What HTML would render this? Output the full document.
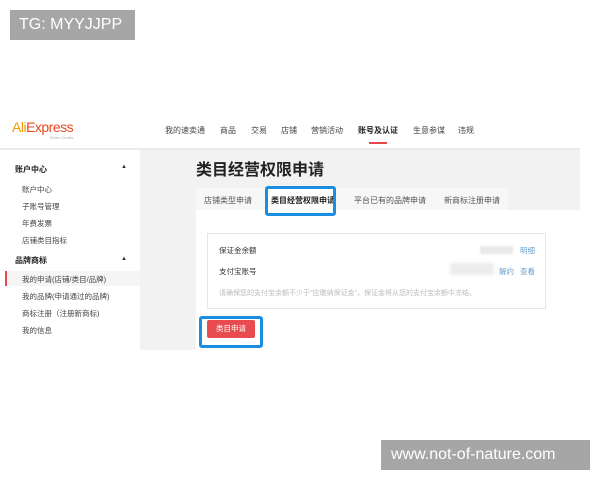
<!DOCTYPE html>
<html><head><meta charset="utf-8"><style>
*{margin:0;padding:0;box-sizing:border-box}
body{width:600px;height:480px;background:#fff;position:relative;overflow:hidden;font-family:"Liberation Sans","Noto Sans CJK SC",sans-serif;color:#333}
.a{position:absolute;white-space:nowrap}
.wm{background:#a6a6a6;color:#fff;font-size:16px;line-height:30px;padding-left:9px}
.nav{font-size:8px;color:#444;top:125px}
.sb{font-size:7.5px;color:#444;left:22px}
.sh{font-size:8px;font-weight:bold;color:#222;left:15px}
</style></head><body>
<div class="a wm" style="left:10px;top:10px;width:125px;height:30px">TG: MYYJJPP</div>
<div class="a wm" style="left:381px;top:440px;width:209px;height:30px;padding-left:10px">www.not-of-nature.com</div>

<div class="a" style="left:12px;top:119px;font-size:14px;letter-spacing:-0.5px;color:#e8491d"><span style="color:#f39800">Ali</span>Express</div>
<div class="a" style="left:50px;top:135px;font-size:4px;color:#aaa">Seller Center</div>
<div class="a nav" style="left:165px">我的速卖通</div>
<div class="a nav" style="left:220px">商品</div>
<div class="a nav" style="left:251px">交易</div>
<div class="a nav" style="left:281px">店铺</div>
<div class="a nav" style="left:311px">营销活动</div>
<div class="a nav" style="left:358px;font-weight:bold;color:#222">账号及认证</div>
<div class="a nav" style="left:413px">生意参谋</div>
<div class="a nav" style="left:458px">违规</div>
<div class="a" style="left:369px;top:142px;width:18px;height:2px;background:#e8474c"></div>

<div class="a" style="left:0;top:148px;width:580px;height:2px;background:#eaeaea"></div>
<div class="a" style="left:140px;top:150px;width:440px;height:200px;background:#f2f2f3"></div>
<div class="a" style="left:5px;top:150px;width:135px;height:200px;background:#fff"></div>
<div class="a sh" style="top:164px">账户中心</div>
<div class="a" style="left:121px;top:164px;font-size:6px">▲</div>
<div class="a sb" style="top:184px">账户中心</div>
<div class="a sb" style="top:201px">子账号管理</div>
<div class="a sb" style="top:218px">年费发票</div>
<div class="a sb" style="top:235px">店铺类目指标</div>
<div class="a sh" style="top:255px">品牌商标</div>
<div class="a" style="left:121px;top:256px;font-size:6px">▲</div>
<div class="a" style="left:5px;top:271px;width:135px;height:15px;background:#f5f5f5;border-left:2px solid #e8474c"></div>
<div class="a sb" style="top:274px">我的申请(店铺/类目/品牌)</div>
<div class="a sb" style="top:291px">我的品牌(申请通过的品牌)</div>
<div class="a sb" style="top:308px">商标注册（注册新商标)</div>
<div class="a sb" style="top:325px">我的信息</div>

<div class="a" style="left:196px;top:156px;font-size:16px;font-weight:bold;color:#222">类目经营权限申请</div>
<div class="a" style="left:196px;top:188px;width:312px;height:22px;background:#f7f7f8"></div>
<div class="a" style="left:196px;top:210px;width:384px;height:140px;background:#fff"></div>
<div class="a" style="left:265px;top:188px;width:70px;height:24px;background:#fff"></div>
<div class="a" style="left:204px;top:195px;font-size:8px;color:#555">店铺类型申请</div>
<div class="a" style="left:271px;top:195px;font-size:8px;color:#222;font-weight:bold">类目经营权限申请</div>
<div class="a" style="left:354px;top:195px;font-size:8px;color:#555">平台已有的品牌申请</div>
<div class="a" style="left:444px;top:195px;font-size:8px;color:#555">新商标注册申请</div>
<div class="a" style="left:265px;top:186px;width:71px;height:30px;border:3px solid #1a8ee0;border-radius:3px"></div>

<div class="a" style="left:207px;top:233px;width:339px;height:76px;border:1px solid #e6e6e6;background:#fff"></div>
<div class="a" style="left:219px;top:245px;font-size:7.5px">保证金余额</div>
<div class="a" style="left:219px;top:266px;font-size:7.5px">支付宝账号</div>
<div class="a" style="left:219px;top:288px;font-size:7px;color:#bbb">请确保您的支付宝余额不少于"应缴纳保证金"，保证金将从您的支付宝余额中冻结。</div>
<div class="a" style="left:480px;top:246px;width:33px;height:8px;background:#e8e8e8;filter:blur(1px)"></div>
<div class="a" style="left:450px;top:263px;width:44px;height:12px;background:#ececec;filter:blur(1.5px)"></div>
<div class="a" style="left:520px;top:245px;font-size:7.5px;color:#6a9fd0">明细</div>
<div class="a" style="left:499px;top:266px;font-size:7.5px;color:#6a9fd0">解约</div>
<div class="a" style="left:520px;top:266px;font-size:7.5px;color:#6a9fd0">查看</div>

<div class="a" style="left:207px;top:320px;width:48px;height:18px;background:#e84c4f;border-radius:2px;color:#fff;font-size:7.5px;text-align:center;line-height:18px">类目申请</div>
<div class="a" style="left:199px;top:316px;width:64px;height:32px;border:3px solid #1a8ee0;border-radius:3px"></div>
</body></html>
